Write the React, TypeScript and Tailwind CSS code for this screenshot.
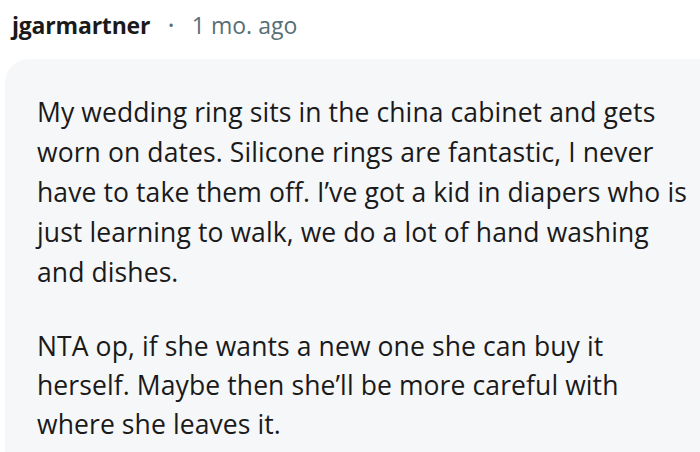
export default function App() {
  return (
    <div className="w-[700px] h-[452px] overflow-hidden bg-white font-['Open_Sans',sans-serif] text-[#1a1a1b]">
      {/* Header */}
      <div className="flex items-center h-[50px] pl-[12px] pt-[1px]">
        <span className="text-[23px] font-bold tracking-[-0.2px]">jgarmartner</span>
        <span className="ml-[18px] mr-[18px] text-[15px] text-[#576f76]">•</span>
        <span className="text-[23px] text-[#576f76]">1 mo. ago</span>
      </div>

      {/* Body */}
      <div className="ml-[5px] mt-[9px] rounded-tl-[24px] bg-[#f6f7f8] h-[400px] pl-[32px] pr-[12px] pt-[33px] text-[26.5px] leading-[40px] tracking-[0.1px]">
        <p>
          My wedding ring sits in the china cabinet and gets worn on dates. Silicone rings are fantastic, I never have to take them off. I’ve got a kid in diapers who is just learning to walk, we do a lot of hand washing and dishes.
        </p>
        <p className="mt-[35px] leading-[39px]">
          NTA op, if she wants a new one she can buy it herself. Maybe then she’ll be more careful with where she leaves it.
        </p>
      </div>
    </div>
  );
}
